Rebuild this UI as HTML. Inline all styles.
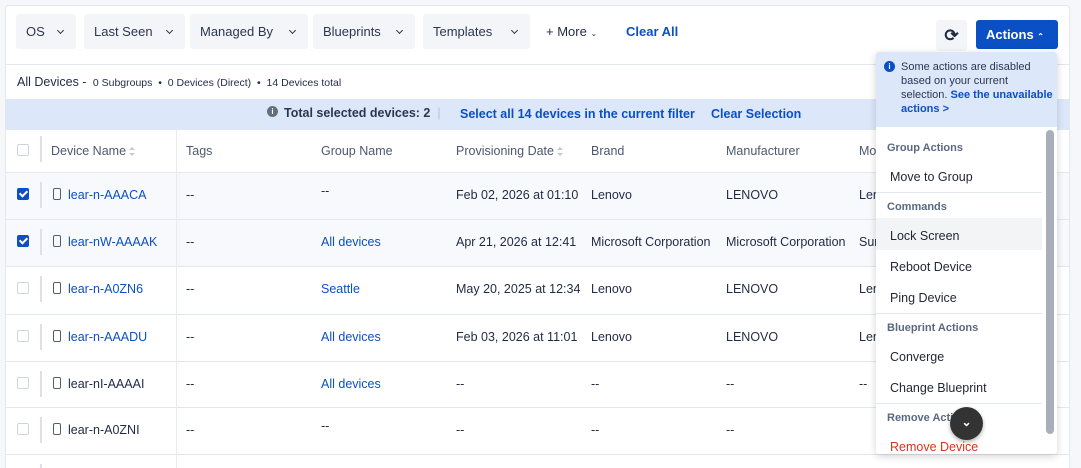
<!DOCTYPE html>
<html><head><style>
*{box-sizing:border-box;margin:0;padding:0}
body{width:1081px;height:468px;overflow:hidden;background:#f5f7fa;font-family:"Liberation Sans",sans-serif;color:#1f2a44;position:relative}
.card{position:absolute;left:5px;top:5px;width:1065px;height:463px;background:#fff;border:1px solid #e3e7ee;border-bottom:none;border-radius:4px 4px 0 0;overflow:hidden}
.f{position:absolute;top:8px;height:35px;background:#f3f5f8;border-radius:3px;font-size:13px;color:#2c3650;line-height:35px;padding-left:10px}
.f:after{content:"";position:absolute;right:13px;top:14px;width:4px;height:4px;border-right:1.5px solid #2c3650;border-bottom:1.5px solid #2c3650;transform:rotate(45deg)}
.a{position:absolute;font-size:12.5px}
.link{color:#0b4fc4}
.row{position:absolute;left:0;width:1065px;height:47px;border-top:1px solid #e3e7ee;font-size:12.5px;color:#1f2a44}
.row span{position:absolute;top:15px;white-space:nowrap}
.sel{background:#f7f9fd}
.cb{position:absolute;left:11px;top:15px;width:12px;height:12px;border:1px solid #cfd5de;border-radius:2px;background:#fff}
.cb.on{background:#0b4fc4;border-color:#0b4fc4}
.cb.on:after{content:"";position:absolute;left:3px;top:0px;width:3px;height:6px;border-right:2px solid #fff;border-bottom:2px solid #fff;transform:rotate(45deg)}
.vd{position:absolute;left:34px;top:9px;width:2px;height:26px;background:#dde1e7}
.ph{position:absolute;left:47px;top:15px;width:8px;height:12px;border:1.3px solid #555e70;border-radius:2px}
.sort{display:inline-block;width:6px;height:9px;position:relative;vertical-align:middle;margin-left:3px}
.sort:before,.sort:after{content:"";position:absolute;left:0;border-left:3px solid transparent;border-right:3px solid transparent}
.sort:before{top:0;border-bottom:3px solid #c3c9d3}
.sort:after{bottom:0;border-top:3px solid #c3c9d3}
.dd{position:absolute;left:876px;top:52px;width:181px;height:402px;background:#fff;box-shadow:0 2px 8px rgba(0,0,0,.18);border-radius:3px;overflow:hidden}
.dh{position:absolute;left:11px;font-size:11px;color:#5a6882;font-weight:bold}
.di{position:absolute;left:14px;font-size:12.5px;color:#1f2533}
.hr{position:absolute;left:0;width:166px;height:1px;background:#e3e7ee}
</style></head><body>
<div class="card">
<div class="f" style="left:10px;width:60px">OS</div>
<div class="f" style="left:78px;width:101px">Last Seen</div>
<div class="f" style="left:184px;width:118px">Managed By</div>
<div class="f" style="left:307px;width:102px">Blueprints</div>
<div class="f" style="left:417px;width:107px">Templates</div>
<div class="a" style="left:540px;top:18px;font-size:13px">+ More <span style="font-size:8px">⌄</span></div>
<div class="a link" style="left:620px;top:18px;font-weight:bold;font-size:13px">Clear All</div>
<div style="position:absolute;left:930px;top:14px;width:31px;height:31px;background:#f3f5f8;border-radius:3px;text-align:center;line-height:31px;font-size:17px;font-weight:bold">⟳</div>
<div style="position:absolute;left:970px;top:14px;width:82px;height:29px;background:#0b4fc4;border-radius:3px;color:#fff;font-weight:bold;font-size:13px;line-height:29px;padding-left:10px">Actions <span style="font-size:8px">⌃</span></div>
<div style="position:absolute;left:0;top:58px;width:1065px;height:1px;background:#e3e7ee"></div>
<div class="a" style="left:11px;top:69px;font-size:12.5px">All Devices - <span style="font-size:10.5px">&nbsp;0 Subgroups &nbsp;•&nbsp; 0 Devices (Direct) &nbsp;•&nbsp; 14 Devices total</span></div>
<div style="position:absolute;left:0;top:93px;width:1065px;height:30px;background:#dce8fa;font-size:12.5px;font-weight:bold">
<span style="position:absolute;left:261px;top:7px;width:11px;height:11px;border-radius:50%;background:#666e7c;color:#fff;font-size:8px;text-align:center;line-height:11px">i</span>
<span style="position:absolute;left:278px;top:7px;color:#2c3650">Total selected devices: 2 &nbsp;<span style="color:#b9c2d0;font-weight:normal">|</span></span>
<span class="link" style="position:absolute;left:454px;top:8px">Select all 14 devices in the current filter</span>
<span class="link" style="position:absolute;left:705px;top:8px">Clear Selection</span>
</div>
<div class="row" style="top:123px;height:43px;font-size:12.5px;color:#4d5870">
<div class="cb" style="top:14px"></div><div class="vd" style="top:6px"></div>
<span style="left:45px;top:14px">Device Name<i class="sort"></i></span>
<span style="left:180px;top:14px">Tags</span><span style="left:315px;top:14px">Group Name</span>
<span style="left:450px;top:14px">Provisioning Date<i class="sort"></i></span>
<span style="left:585px;top:14px">Brand</span><span style="left:720px;top:14px">Manufacturer</span><span style="left:853px;top:14px">Mo</span>
</div>
<div class="row sel" style="top:166px"><div class="cb on"></div><div class="vd"></div><div class="ph"></div><span class="link" style="left:62px">lear-n-AAACA</span><span style="left:180px">--</span><span style="left:315px;top:11px">--</span><span style="left:450px">Feb 02, 2026 at 01:10</span><span style="left:585px">Lenovo</span><span style="left:720px">LENOVO</span><span style="left:853px">Ler</span></div>
<div class="row sel" style="top:213px"><div class="cb on"></div><div class="vd"></div><div class="ph"></div><span class="link" style="left:62px">lear-nW-AAAAK</span><span style="left:180px">--</span><span class="link" style="left:315px">All devices</span><span style="left:450px">Apr 21, 2026 at 12:41</span><span style="left:585px">Microsoft Corporation</span><span style="left:720px">Microsoft Corporation</span><span style="left:853px">Sur</span></div>
<div class="row" style="top:260px;height:48px"><div class="cb"></div><div class="vd"></div><div class="ph"></div><span class="link" style="left:62px">lear-n-A0ZN6</span><span style="left:180px">--</span><span class="link" style="left:315px">Seattle</span><span style="left:450px">May 20, 2025 at 12:34</span><span style="left:585px">Lenovo</span><span style="left:720px">LENOVO</span><span style="left:853px">Ler</span></div>
<div class="row" style="top:308px"><div class="cb"></div><div class="vd"></div><div class="ph"></div><span class="link" style="left:62px">lear-n-AAADU</span><span style="left:180px">--</span><span class="link" style="left:315px">All devices</span><span style="left:450px">Feb 03, 2026 at 11:01</span><span style="left:585px">Lenovo</span><span style="left:720px">LENOVO</span><span style="left:853px">Ler</span></div>
<div class="row" style="top:355px;height:46px"><div class="cb"></div><div class="vd"></div><div class="ph"></div><span style="left:62px">lear-nI-AAAAI</span><span style="left:180px">--</span><span class="link" style="left:315px">All devices</span><span style="left:450px">--</span><span style="left:585px">--</span><span style="left:720px">--</span><span style="left:853px">--</span></div>
<div class="row" style="top:401px"><div class="cb"></div><div class="vd"></div><div class="ph"></div><span style="left:62px">lear-n-A0ZNI</span><span style="left:180px">--</span><span style="left:315px;top:11px">--</span><span style="left:450px">--</span><span style="left:585px">--</span><span style="left:720px">--</span></div>
<div class="row" style="top:448px;height:20px"><div class="cb"></div><div class="vd"></div><div class="ph"></div></div>
<div style="position:absolute;left:170px;top:123px;width:1px;height:345px;background:#e8ebf0;box-shadow:2px 0 4px rgba(0,0,0,.06)"></div>
</div>
<div class="dd">
<div style="position:absolute;left:0;top:0;width:181px;height:75px;background:#dce8fa"></div>
<span style="position:absolute;left:8px;top:9px;width:11px;height:11px;border-radius:50%;background:#0b4fc4;color:#fff;font-size:8px;text-align:center;line-height:11px;font-weight:bold">i</span>
<div style="position:absolute;left:25px;top:8px;width:152px;font-size:11px;line-height:14px;color:#2c3650">Some actions are disabled based on your current selection. <span class="link" style="font-weight:bold">See the unavailable actions &gt;</span></div>
<div class="dh" style="top:90px">Group Actions</div>
<div class="di" style="top:118px">Move to Group</div>
<div class="hr" style="top:140px"></div>
<div class="dh" style="top:149px">Commands</div>
<div style="position:absolute;left:0;top:166px;width:166px;height:32px;background:#f3f4f6"></div>
<div class="di" style="top:177px">Lock Screen</div>
<div class="di" style="top:208px">Reboot Device</div>
<div class="di" style="top:239px">Ping Device</div>
<div class="hr" style="top:261px"></div>
<div class="dh" style="top:270px">Blueprint Actions</div>
<div class="di" style="top:298px">Converge</div>
<div class="di" style="top:329px">Change Blueprint</div>
<div class="hr" style="top:351px"></div>
<div class="dh" style="top:360px">Remove Actions</div>
<div class="di" style="top:388px;color:#d4351c">Remove Device</div>
<div style="position:absolute;left:170px;top:78px;width:8px;height:304px;background:#a9afba;border-radius:4px"></div>
<div style="position:absolute;left:74px;top:355px;width:33px;height:33px;border-radius:50%;background:#333;box-shadow:0 2px 4px rgba(0,0,0,.3);color:#fff;text-align:center;line-height:30px;font-size:12px;font-weight:bold">⌄</div>
</div>
</body></html>
